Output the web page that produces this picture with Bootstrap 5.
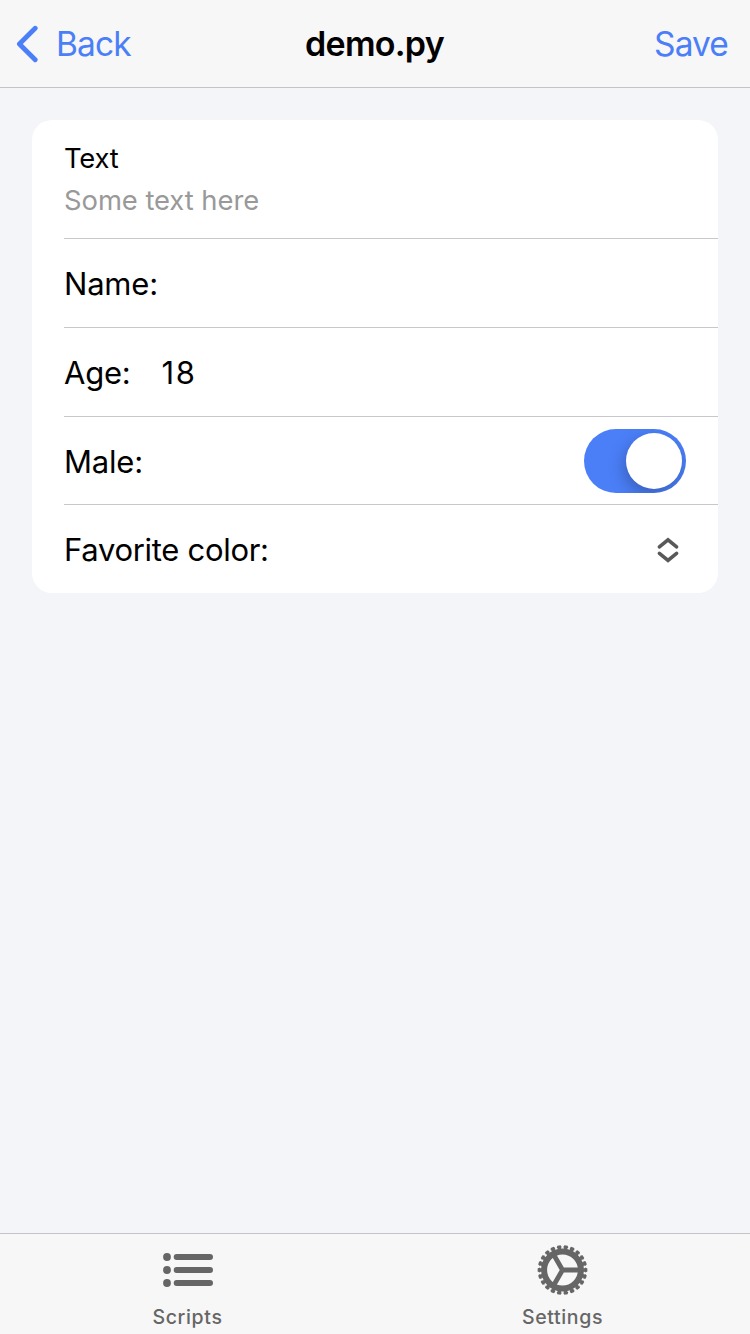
<!DOCTYPE html>
<html lang="en">
<head>
<meta charset="utf-8">
<meta name="viewport" content="width=device-width, initial-scale=1">
<title>demo.py</title>
<link href="https://cdn.jsdelivr.net/npm/bootstrap@5.3.0/dist/css/bootstrap.min.css" rel="stylesheet">
<style>
  body { background: #f3f5f9; color: #000; font-family: Inter, "Liberation Sans", sans-serif; font-size: 31px; line-height: 40px; }
  svg { display: block; flex: none; }
  .top-bar { grid-template-columns: 1fr auto 1fr; height: 88px; background: #f7f7f7; border-bottom: 1px solid #c4c4c6; padding: 0 22px 0 16px; font-size: 33.5px; }
  .top-bar a { color: #4b7ff8; letter-spacing: -.9px; }
  .top-bar h1 { font-size: 34px; letter-spacing: -.75px; line-height: 40px; padding-left: 5px; }
  .back-label { margin-left: 17px; }
  .form-panel { margin: 32px 32px 0; border-radius: 20px; padding-left: 32px; }
  .form-line { height: 89px; border-bottom: 1px solid #c8c7cc; padding-right: 32px; padding-top: 1px; letter-spacing: -.2px; }
  .form-line:last-child { border-bottom: 0; height: 88px; }
  .note-line { height: 119px; font-size: 27.4px; line-height: 42px; padding-top: 17px; }
  .note-line p { color: #999; letter-spacing: -.05px; }
  .toggle-line { height: 88px; padding-top: 3px; }
  .age-value { padding-left: 31px; letter-spacing: 1.5px; }
  .color-label { letter-spacing: -.3px; }
  .switch { width: 102px; height: 64px; background: #4b7ff8; padding: 4px; border-radius: 32px; overflow: hidden; margin-top: -2px; }
  .knob { width: 56px; height: 56px; background: #fff; box-shadow: -2px 6px 16px rgba(0,0,0,.25); }
  .tab-bar { height: 101px; background: #f7f7f7; border-top: 1px solid #c4c4c6; color: #666; }
  .tab-bar a { color: #666; font-size: 19.5px; font-weight: 500; line-height: 24px; padding-top: 10px; }
  .tab-bar svg { margin-right: 1px; }
  .tab-bar span { margin-top: 9px; letter-spacing: .65px; }
</style>
</head>
<body>
<div class="d-flex flex-column vh-100">
  <header class="top-bar d-grid align-items-center">
    <a href="#" class="d-flex align-items-center text-decoration-none">
      <svg width="23" height="38" viewBox="0 0 23 38" fill="none" stroke="currentColor" stroke-width="4.8" stroke-linecap="round" stroke-linejoin="round"><path d="M19.2 3.3 3.4 19 19.2 34.8"/></svg>
      <span class="back-label">Back</span>
    </a>
    <h1 class="fw-semibold mb-0">demo.py</h1>
    <a href="#" class="text-end text-decoration-none">Save</a>
  </header>
  <main class="flex-grow-1">
    <div class="form-panel bg-white">
      <div class="form-line note-line"><div>Text</div><p class="m-0">Some text here</p></div>
      <div class="form-line d-flex align-items-center">Name:</div>
      <div class="form-line d-flex align-items-center"><span>Age:</span><span class="age-value">18</span></div>
      <div class="form-line toggle-line d-flex align-items-center justify-content-between"><span>Male:</span>
        <div class="switch d-flex justify-content-end" role="switch" aria-checked="true"><div class="knob rounded-circle"></div></div>
      </div>
      <div class="form-line d-flex align-items-center justify-content-between"><span class="color-label">Favorite color:</span>
        <svg width="36" height="36" viewBox="0 0 36 36" fill="none" stroke="#595959" stroke-width="3.6" stroke-linecap="round" stroke-linejoin="miter"><path d="M9.4 14.8 18 7.8 26.6 14.8M9.4 21.4 18 28.4 26.6 21.4"/></svg>
      </div>
    </div>
  </main>
  <nav class="tab-bar d-flex">
    <a href="#" class="col-6 d-flex flex-column align-items-center text-decoration-none">
      <svg width="52" height="52" viewBox="0 0 52 52" fill="currentColor"><circle cx="6" cy="13" r="3.9"/><circle cx="6" cy="26" r="3.9"/><circle cx="6" cy="39" r="3.9"/><rect x="12.7" y="10" width="39.3" height="6" rx="3"/><rect x="12.7" y="23" width="39.3" height="6" rx="3"/><rect x="12.7" y="36" width="39.3" height="6" rx="3"/></svg>
      <span>Scripts</span>
    </a>
    <a href="#" class="col-6 d-flex flex-column align-items-center text-decoration-none">
      <svg width="52" height="52" viewBox="-26.5 -26 52 52" fill="none" stroke="currentColor">
        <circle r="18.4" stroke-width="6"/>
        <path id="teeth" fill="currentColor" stroke="none"/>
        <path d="M0 0H17M0 0-8.5-14.7M0 0-8.5 14.7" stroke-width="4.8"/>
      </svg>
      <span>Settings</span>
    </a>
  </nav>
</div>
<script>
  // Builds the 22 evenly spaced teeth of the cog.
  const at = (r, a) => (r * Math.cos(a)).toFixed(2) + ' ' + (r * Math.sin(a)).toFixed(2);
  let d = '';
  for (let i = 0; i < 22; i++) {
    const a = i * Math.PI / 11;
    d += `M${at(20.8, a - .1)}L${at(22.1, a - .075)}L${at(23.1, a - .11)}L${at(24.9, a - .065)}L${at(24.9, a + .065)}L${at(23.1, a + .11)}L${at(22.1, a + .075)}L${at(20.8, a + .1)}Z`;
  }
  document.getElementById('teeth').setAttribute('d', d);
</script>
<script src="https://cdn.jsdelivr.net/npm/bootstrap@5.3.0/dist/js/bootstrap.bundle.min.js"></script>
</body>
</html>
